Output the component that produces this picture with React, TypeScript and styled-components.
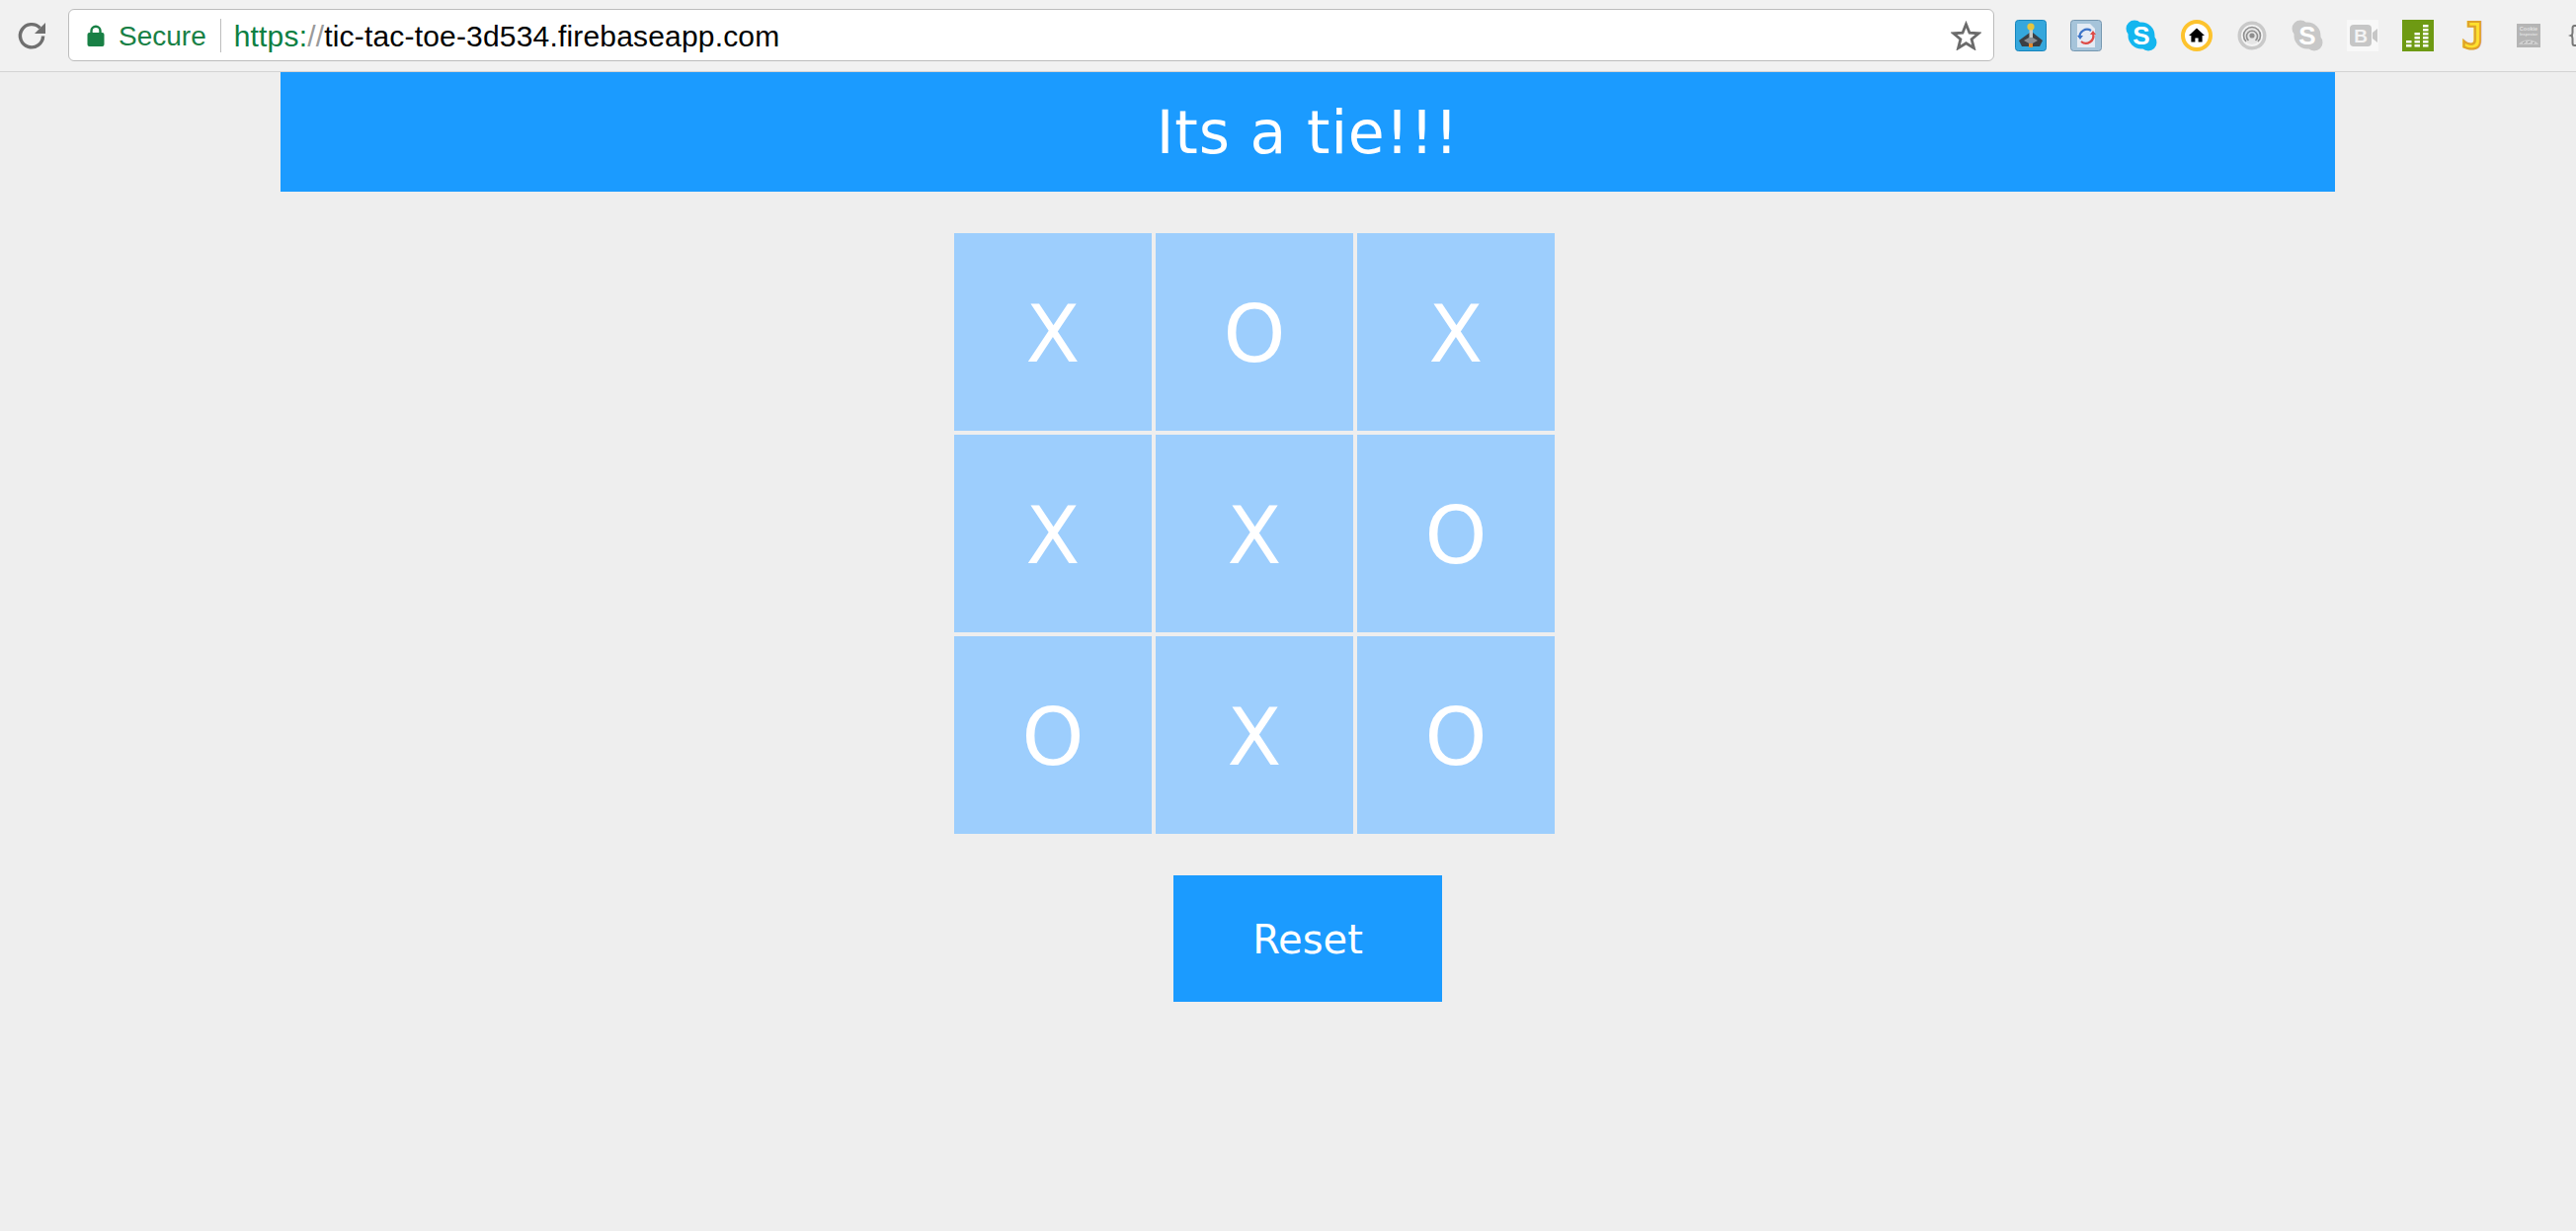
import React from 'react';
import styled, { createGlobalStyle } from 'styled-components';

const GlobalStyle = createGlobalStyle`
	html,
	body {
		margin: 0;
		padding: 0;
		background: #eeeeee;
	}

	body {
		width: 2608px;
		height: 1246px;
		overflow: hidden;
		font-family: 'DejaVu Sans', Verdana, sans-serif;
	}
`;

const board: string[] = ['X', 'O', 'X', 'X', 'X', 'O', 'O', 'X', 'O'];

const ReloadIcon = () => (
	<svg width='32' height='32' viewBox='0 0 32 32' fill='none'>
		<path d='M24.6 8.4A11.6 11.6 0 1 0 27.6 16.5' stroke='#6f6f6f' strokeWidth='3.4' />
		<path d='M30 3V14H19Z' fill='#6f6f6f' />
	</svg>
);

const LockIcon = () => (
	<svg width='18' height='22' viewBox='0 0 18 22'>
		<path d='M4.5 10V6.2a4.5 4.5 0 0 1 9 0V10' fill='none' stroke='#188045' strokeWidth='2.4' />
		<rect x='0.5' y='8' width='17' height='14' rx='2' fill='#188045' />
	</svg>
);

const StarIcon = () => (
	<svg width='31' height='30' viewBox='0 0 31 30' fill='none'>
		<path d='M15.5 3.5L19 12.2L28.2 12.8L21.1 18.7L23.4 27.6L15.5 22.7L7.6 27.6L9.9 18.7L2.8 12.8L12 12.2Z' stroke='#6b6b6b' strokeWidth='2.8' />
	</svg>
);

const JoystickIcon = () => (
	<svg width='32' height='32' viewBox='0 0 32 32'>
		<rect x='0.5' y='0.5' width='31' height='31' rx='3' fill='#35a7dc' stroke='#1685bd' />
		<path d='M4 21L15 13h3l10 8-3 6H7Z' fill='#3c3f44' />
		<path d='M9 21l7-4 7 4-7 4Z' fill='#8b8f94' />
		<rect x='14.5' y='8' width='3.5' height='10' fill='#c9c9c4' />
		<circle cx='16' cy='7' r='3.6' fill='#e6c53f' />
		<rect x='14' y='24' width='4' height='4' fill='#e58a2c' />
	</svg>
);

const SyncIcon = () => (
	<svg width='32' height='32' viewBox='0 0 32 32' fill='none'>
		<rect x='0.5' y='0.5' width='31' height='31' rx='3' fill='#a6c4da' stroke='#7597b0' />
		<path d='M7 4h13l5 5v19H7Z' fill='#e4ebf4' />
		<path d='M21 11A7.5 7.5 0 0 0 9.5 18' stroke='#3c74c8' strokeWidth='2.2' />
		<path d='M11 22A7.5 7.5 0 0 0 23 14' stroke='#de4a45' strokeWidth='2.2' />
		<path d='M7 16l3 4 3-4Z' fill='#3c74c8' />
		<path d='M20 15l3-4 3 4Z' fill='#de4a45' />
	</svg>
);

const SkypeIcon = ({ color }: { color: string }) => (
	<svg width='32' height='32' viewBox='0 0 32 32' overflow='visible'>
		<circle cx='16' cy='16' r='13.5' fill={color} />
		<circle cx='9' cy='9' r='8.5' fill={color} />
		<circle cx='23' cy='23' r='8.5' fill={color} />
		<text x='16' y='25' textAnchor='middle' fontFamily='Liberation Sans, sans-serif' fontWeight='700' fontSize='26' fill='#ffffff'>
			S
		</text>
	</svg>
);

const HomeIcon = () => (
	<svg width='32' height='32' viewBox='0 0 32 32'>
		<ellipse cx='16' cy='16' rx='14' ry='14' fill='#ffffff' stroke='#fdc32d' strokeWidth='4' />
		<path d='M16 8.5L24 16h-2.4v6.5h-4v-4h-3.2v4h-4V16H8Z' fill='#000000' />
	</svg>
);

const BeaconIcon = () => (
	<svg width='32' height='32' viewBox='0 0 32 32' fill='none'>
		<circle cx='16' cy='16' r='14.5' fill='#c9c9c9' />
		<circle cx='16' cy='16' r='10' fill='#e6e6e6' stroke='#f4f4f4' strokeWidth='2' />
		<path d='M10 22A8.5 8.5 0 1 1 22 22' stroke='#8e8e8e' strokeWidth='1.6' />
		<path d='M12.5 21A5.5 5.5 0 1 1 19.5 21' stroke='#8e8e8e' strokeWidth='1.6' />
		<circle cx='16' cy='16' r='2.6' fill='#8e8e8e' />
	</svg>
);

const VideoBadgeIcon = () => (
	<svg width='32' height='32' viewBox='0 0 32 32' overflow='visible'>
		<rect width='32' height='32' fill='#f8f8f8' />
		<rect x='3' y='5' width='22' height='22' rx='4' fill='#c6c6c6' />
		<path d='M26 13l5-4v14l-5-4Z' fill='#c6c6c6' />
		<text x='14' y='23' textAnchor='middle' fontFamily='Liberation Sans, sans-serif' fontWeight='700' fontSize='19' fill='#f4f4f4'>
			B
		</text>
	</svg>
);

const LevelsIcon = () => {
	const columns = [2, 4, 6];
	return (
		<svg width='32' height='32' viewBox='0 0 32 32'>
			<rect width='32' height='32' fill='#6e9a13' />
			{columns.map((count, col) =>
				Array.from({ length: count }).map((_, row) => (
					<rect key={`${col}-${row}`} x={4 + col * 8.5} y={25 - row * 4} width='5.5' height='2.5' fill='#ffffff' />
				))
			)}
		</svg>
	);
};

const JIcon = () => (
	<svg width='32' height='32' viewBox='0 0 32 32' overflow='visible'>
		<text
			x='16'
			y='29'
			textAnchor='middle'
			fontFamily='DejaVu Sans Mono, monospace'
			fontWeight='700'
			fontSize='38'
			fill='#ffe12e'
			stroke='#dfa32a'
			strokeWidth='2.2'
		>
			J
		</text>
	</svg>
);

const CookieIcon = () => (
	<svg width='32' height='32' viewBox='0 0 32 32' overflow='visible'>
		<rect x='4' y='4' width='24' height='24' fill='#b5b5b5' />
		<text x='16' y='11' textAnchor='middle' fontFamily='Liberation Sans, sans-serif' fontSize='5.5' fontWeight='700' fill='#e2e2e2'>
			Cookie
		</text>
		<text x='16' y='16' textAnchor='middle' fontFamily='Liberation Sans, sans-serif' fontSize='4' fontWeight='700' fill='#e2e2e2'>
			Inspector
		</text>
		<path d='M6 25C9 19 23 19 26 25Z' fill='#cfcfcf' />
		<path d='M10 24l3-2M15 23l3-1M20 24l2-1' stroke='#9a9a9a' strokeWidth='1' />
	</svg>
);

const BraceIcon = () => (
	<svg width='32' height='32' viewBox='0 0 32 32' fill='none'>
		<path d='M8 6H6.5Q4.5 6 4.5 8.5V13Q4.5 15.5 3 16Q4.5 16.5 4.5 19V23.5Q4.5 26 6.5 26H8' stroke='#777777' strokeWidth='2' />
	</svg>
);

const App = (): React.FunctionComponentElement<JSX.Element> => {
	return (
		<>
			<GlobalStyle />
			<Toolbar>
				<ReloadIcon />
				<UrlBar>
					<LockIcon />
					<SecureLabel>Secure</SecureLabel>
					<Address>
						<Protocol>https:</Protocol>
						<Slashes>//</Slashes>
						tic-tac-toe-3d534.firebaseapp.com
					</Address>
					<StarIcon />
				</UrlBar>
				<Extensions>
					<JoystickIcon />
					<SyncIcon />
					<SkypeIcon color='#14b6ef' />
					<HomeIcon />
					<BeaconIcon />
					<SkypeIcon color='#c8c8c8' />
					<VideoBadgeIcon />
					<LevelsIcon />
					<JIcon />
					<CookieIcon />
					<BraceIcon />
				</Extensions>
			</Toolbar>
			<Game>
				<Status>Its a tie!!!</Status>
				<Board>
					{board.map((mark, index) => (
						<Cell key={index}>{mark}</Cell>
					))}
				</Board>
				<ResetButton>Reset</ResetButton>
			</Game>
		</>
	);
};

const Toolbar = styled.header`
	display: flex;
	align-items: center;
	box-sizing: border-box;
	height: 73px;
	padding-left: 16px;
	background: #f1f1f1;
	border-bottom: 1px solid #d3d3d3;
	overflow: hidden;

	> svg {
		flex: none;
	}
`;

const UrlBar = styled.div`
	display: flex;
	align-items: center;
	flex: none;
	box-sizing: border-box;
	width: 1950px;
	height: 53px;
	margin: -1px 21px 0 21px;
	padding: 0 12px 0 18px;
	background: #ffffff;
	border: 1.5px solid #bcbcbc;
	border-radius: 6px;
	font-family: 'Liberation Sans', Arial, sans-serif;
	font-size: 28px;

	> svg {
		flex: none;
	}
`;

const SecureLabel = styled.span`
	margin-left: 14px;
	padding: 2px 14px 0 0;
	border-right: 1.5px solid #bdbdbd;
	color: #188045;
	line-height: 32px;
`;

const Address = styled.span`
	flex: 1;
	margin-left: 13px;
	padding-top: 2px;
	color: #000000;
	font-size: 30px;
	letter-spacing: 0.18px;
`;

const Protocol = styled.span`
	color: #0b8043;
`;

const Slashes = styled.span`
	color: #9a9a9a;
`;

const Extensions = styled.div`
	display: flex;
	flex: none;
	gap: 24px;

	> svg {
		flex: none;
	}
`;

const Game = styled.main`
	display: flex;
	flex-direction: column;
	width: 2080px;
	margin-left: 284px;
`;

const Status = styled.h1`
	box-sizing: border-box;
	margin: 0;
	height: 121px;
	padding-top: 2px;
	background: #1b9bff;
	color: #ffffff;
	font-size: 60px;
	font-weight: 400;
	letter-spacing: 0.8px;
	line-height: 119px;
	text-align: center;
`;

const Board = styled.div`
	display: grid;
	grid-template-columns: repeat(3, 200px);
	grid-auto-rows: 200px;
	gap: 4px;
	width: 608px;
	margin: 42px 0 0 682px;
`;

const Cell = styled.div`
	display: flex;
	align-items: center;
	justify-content: center;
	box-sizing: border-box;
	padding-top: 5px;
	background: #9dcefd;
	color: #ffffff;
	font-size: 80px;
`;

const ResetButton = styled.button`
	align-self: center;
	width: 272px;
	height: 128px;
	margin-top: 42px;
	padding: 2px 0 0;
	border: none;
	background: #1b9bff;
	color: #ffffff;
	font-family: inherit;
	font-size: 40px;
`;

export default App;
